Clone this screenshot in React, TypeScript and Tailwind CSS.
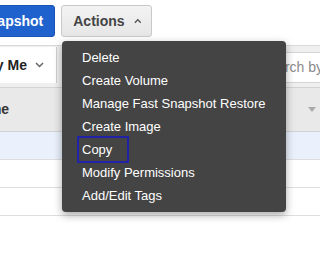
import React from "react";

const items = [
  "Delete",
  "Create Volume",
  "Manage Fast Snapshot Restore",
  "Create Image",
  "Copy",
  "Modify Permissions",
  "Add/Edit Tags",
];

export default function App() {
  return (
    <div
      className="relative w-[320px] h-[258px] overflow-hidden bg-white"
      style={{ fontFamily: '"Liberation Sans", Arial, sans-serif' }}
    >
      {/* top buttons */}
      <div className="flex items-start gap-[6px] pt-[5px] h-[45px]">
        <button className="shrink-0 ml-[-80px] h-[32px] px-[11px] rounded-[3px] bg-[#1f62ce] border border-[#1a55b5] text-white font-bold text-[14px] whitespace-nowrap">
          Create Snapshot
        </button>
        <button className="shrink-0 h-[32px] w-[91px] pl-[11px] pr-[10px] rounded-[3px] bg-gradient-to-b from-[#f3f3f3] to-[#e6e6e6] border border-[#c9c9c9] text-[#444] font-bold text-[14px] flex items-center gap-[9px]">
          Actions
          <svg width="9" height="6" viewBox="0 0 9 6" className="mt-[-1px]">
            <path d="M1 5 L4.5 1.5 L8 5" fill="none" stroke="#555" strokeWidth="1.6" />
          </svg>
        </button>
      </div>

      {/* filter toolbar */}
      <div className="bg-[#efefef] border-t border-[#d9d9d9] h-[42px] flex items-start">
        <div className="shrink-0 mt-[1px] w-[57px] h-[36px] bg-white border-r border-[#d0d0d0] overflow-hidden flex items-center justify-end pr-[12px] gap-[8px] text-[14px] font-bold text-[#222] whitespace-nowrap">
          <span>Owned By Me</span>
          <svg width="9" height="6" viewBox="0 0 9 6" className="shrink-0">
            <path d="M1 1 L4.5 4.5 L8 1" fill="none" stroke="#666" strokeWidth="1.5" />
          </svg>
        </div>
        <div className="flex-1 ml-[5px] mt-[6px] h-[31px] bg-white border-t border-b border-[#d5d5d5] flex items-center pl-[198px] text-[14px] text-[#8a8a8a] whitespace-nowrap overflow-hidden">
          Search by
        </div>
      </div>

      {/* table */}
      <div>
        <div className="h-[45px] bg-[#e9e9e9] border-t border-b border-[#d3d3d3] flex items-center justify-between pr-[4px] text-[14px] font-bold text-[#333] whitespace-nowrap">
          <span className="ml-[-29px]">Name</span>
          <svg width="8" height="5" viewBox="0 0 8 5">
            <path d="M0 0 L8 0 L4 5 Z" fill="#aaa" />
          </svg>
        </div>
        <div className="h-[28px] bg-[#eaf1fc] border-b border-[#dedede]" />
        <div className="h-[28px] bg-white border-b border-[#dedede]" />
        <div className="h-[28px] bg-white border-b border-[#dedede]" />
      </div>

      {/* dropdown menu */}
      <div className="absolute left-[62px] top-[41px] w-[224px] py-[5px] bg-[#444] rounded-[4px] shadow-[0_3px_8px_rgba(0,0,0,0.35)]">
        {items.map((it) => (
          <div key={it} className="h-[23px] flex items-center pl-[16px] text-[13px] text-white whitespace-nowrap">
            <span
              className={
                it === "Copy"
                  ? "px-[4px] h-[25px] w-[50px] flex items-center outline outline-2 outline-[#2222a8] outline-offset-[-1px]"
                  : "px-[4px]"
              }
            >
              {it}
            </span>
          </div>
        ))}
      </div>
    </div>
  );
}
